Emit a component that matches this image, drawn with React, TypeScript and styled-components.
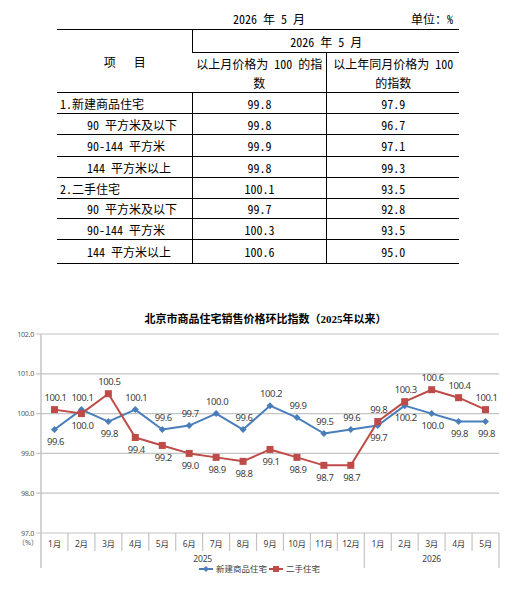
import React from "react";
import styled, { createGlobalStyle } from "styled-components";

const GlobalStyle = createGlobalStyle`
    body {
        margin: 0;
        background: #ffffff;
    }
`

const TABLE_FONT = `"Noto Sans Mono CJK SC", "Noto Sans CJK SC", "Liberation Mono", monospace`
const CHART_FONT = `"Noto Sans", "Noto Sans CJK SC", sans-serif`

const Page = styled.div`
    width: 521px;
    height: 605px;
    background: #fff;
    display: flex;
    flex-direction: column;
`

const TableBlock = styled.div`
    margin-left: 57px;
    width: 402px;
    font-family: ${TABLE_FONT};
    font-size: 12px;
    font-weight: 300;
    color: #000;
`

const Caption = styled.div`
    height: 29px;
    box-sizing: border-box;
    padding-top: 11px;
    line-height: 16px;
    display: flex;
    justify-content: space-between;
`

const CaptionDate = styled.span`
    margin-left: 176px;
    white-space: pre;
`

const CaptionUnit = styled.span`
    margin-right: 6px;
`

const Table = styled.table`
    width: 402px;
    border-collapse: collapse;
    table-layout: fixed;
    border-top: 1px solid #000;
`

const Cell = styled.td<{ $align?: "left" | "center", $indent?: number, $h?: number }>`
    padding: 0 2px 0 ${p => 3 + (p.$indent || 0)}px;
    height: ${p => p.$h || 20}px;
    line-height: 19px;
    text-align: ${p => p.$align || "center"};
    vertical-align: middle;
    border-bottom: 1px solid #000;
    border-left: 1px solid #000;
    white-space: pre-wrap;
    &:first-child {
        border-left: none;
    }
`

const HeadCell = styled(Cell).attrs({ as: "th" })`
    font-weight: 300;
`

const ChartSection = styled.div`
    margin-top: 48px;
    display: flex;
    flex-direction: column;
`

const ChartTitle = styled.div`
    height: 14px;
    line-height: 14px;
    padding-left: 10px;
    text-align: center;
    font-family: "Liberation Serif", "Noto Sans CJK SC", serif;
    font-weight: 700;
    font-size: 11px;
    color: #000;
`

const ChartSvg = styled.svg`
    display: block;
    font-family: ${CHART_FONT};
`

type RowData = { name: string, indent: number, mom: string, yoy: string, h?: number }

const rows: RowData[] = [
    { name: "1.新建商品住宅", indent: 0, mom: "99.8", yoy: "97.9" },
    { name: "90 平方米及以下", indent: 27, mom: "99.8", yoy: "96.7" },
    { name: "90-144 平方米", indent: 27, mom: "99.9", yoy: "97.1", h: 21 },
    { name: "144 平方米以上", indent: 27, mom: "99.8", yoy: "99.3" },
    { name: "2.二手住宅", indent: 0, mom: "100.1", yoy: "93.5" },
    { name: "90 平方米及以下", indent: 27, mom: "99.7", yoy: "92.8", h: 19 },
    { name: "90-144 平方米", indent: 27, mom: "100.3", yoy: "93.5" },
    { name: "144 平方米以上", indent: 27, mom: "100.6", yoy: "95.0", h: 23 },
]

const PriceTable = () => <TableBlock>
    <Caption>
        <CaptionDate>2026 年 5 月</CaptionDate>
        <CaptionUnit>单位：%</CaptionUnit>
    </Caption>
    <Table>
        <colgroup>
            <col style={{ width: 135 }} />
            <col style={{ width: 134 }} />
            <col style={{ width: 133 }} />
        </colgroup>
        <thead>
            <tr>
                <HeadCell rowSpan={2}>{"项   目"}</HeadCell>
                <HeadCell colSpan={2} $h={22}>2026 年 5 月</HeadCell>
            </tr>
            <tr>
                <HeadCell $h={39}>以上月价格为 100 的指数</HeadCell>
                <HeadCell $h={39}>以上年同月价格为 100 的指数</HeadCell>
            </tr>
        </thead>
        <tbody>
            {rows.map((r, i) => <tr key={i}>
                <Cell $align="left" $indent={r.indent} $h={r.h}>{r.name}</Cell>
                <Cell $h={r.h}>{r.mom}</Cell>
                <Cell $h={r.h}>{r.yoy}</Cell>
            </tr>)}
        </tbody>
    </Table>
</TableBlock>

// chart geometry in page coordinates
const PLOT_L = 41
const PLOT_R = 499
const COL = (PLOT_R - PLOT_L) / 17
const yOf = (v: number) => 333 + (102 - v) * 39.8
const xOf = (i: number) => PLOT_L + (i + 0.5) * COL

const BLUE = "#4a7ebb"
const RED = "#be4b48"
const LABEL = "#404040"

const newHomes = [99.6, 100.1, 99.8, 100.1, 99.6, 99.7, 100.0, 99.6, 100.2, 99.9, 99.5, 99.6, 99.7, 100.2, 100.0, 99.8, 99.8]
const resale = [100.1, 100.0, 100.5, 99.4, 99.2, 99.0, 98.9, 98.8, 99.1, 98.9, 98.7, 98.7, 99.8, 100.3, 100.6, 100.4, 100.1]
const newPos = "babaaaaaaaaabbbbb"
const resalePos = "ababbbbbbbbbaaaaa"
const months = [1, 2, 3, 4, 5, 6, 7, 8, 9, 10, 11, 12, 1, 2, 3, 4, 5]

const Series = ({ data, pos, color, marker }: { data: number[], pos: string, color: string, marker: "diamond" | "square" }) => <g>
    <polyline
        points={data.map((v, i) => `${xOf(i)},${yOf(v)}`).join(" ")}
        fill="none" stroke={color} strokeWidth={2} strokeLinejoin="round"
    />
    {data.map((v, i) => marker === "diamond"
        ? <polygon key={"m" + i} fill={color}
            points={`${xOf(i)},${yOf(v) - 3.5} ${xOf(i) + 3.5},${yOf(v)} ${xOf(i)},${yOf(v) + 3.5} ${xOf(i) - 3.5},${yOf(v)}`} />
        : <rect key={"m" + i} fill={color} x={xOf(i) - 3.5} y={yOf(v) - 3.5} width={7} height={7} />)}
    {data.map((v, i) => <text key={"t" + i} x={xOf(i) + 1} y={yOf(v) + (pos[i] === "a" ? -8.5 : 15.5)}
        textAnchor="middle" fontSize={9.5} letterSpacing={-0.45} fill={LABEL}>
        {v.toFixed(1)}
    </text>)}
</g>

const PriceChart = () => <ChartSection>
    <ChartTitle>北京市商品住宅销售价格环比指数（2025年以来）</ChartTitle>
    <ChartSvg width={521} height={255} viewBox="0 325 521 255">
        {[102, 101, 100, 99, 98, 97].map(v => <g key={v}>
            <line x1={36} x2={PLOT_R} y1={yOf(v)} y2={yOf(v)} stroke="#c4c4c4" strokeWidth={1.2} />
            <text x={34} y={yOf(v) + 2.5} textAnchor="end" fontSize={7.2} letterSpacing={-0.3} fill="#595959">{v.toFixed(1)}</text>
        </g>)}
        <text x={28} y={544} textAnchor="middle" fontSize={7.2} fill="#595959">（%）</text>
        <line x1={PLOT_L} x2={PLOT_L} y1={333} y2={567} stroke="#c4c4c4" strokeWidth={1.5} />
        {months.map((m, i) => {
            const edge = PLOT_L + (i + 1) * COL
            const long = i === 11 || i === 16
            return <g key={i}>
                <line x1={edge} x2={edge} y1={yOf(97)} y2={long ? 567 : 550} stroke="#c4c4c4" strokeWidth={1.2} />
                <text x={xOf(i)} y={546} textAnchor="middle" fontSize={8.5} letterSpacing={-0.3} fill={LABEL}>{m}月</text>
            </g>
        })}
        <text x={PLOT_L + 6 * COL} y={561} textAnchor="middle" fontSize={8.5} letterSpacing={-0.2} fill={LABEL}>2025</text>
        <text x={PLOT_L + 14.5 * COL} y={561} textAnchor="middle" fontSize={8.5} letterSpacing={-0.2} fill={LABEL}>2026</text>

        <Series data={newHomes} pos={newPos} color={BLUE} marker="diamond" />
        <Series data={resale} pos={resalePos} color={RED} marker="square" />

        <g>
            <line x1={199} x2={213} y1={568} y2={568} stroke={BLUE} strokeWidth={2} />
            <polygon fill={BLUE} points="206,565 209,568 206,571 203,568" />
            <text x={216} y={571} fontSize={8.5} fill={LABEL}>新建商品住宅</text>
            <line x1={269} x2={283} y1={568} y2={568} stroke={RED} strokeWidth={2} />
            <rect fill={RED} x={273} y={565} width={6} height={6} />
            <text x={286} y={571} fontSize={8.5} fill={LABEL}>二手住宅</text>
        </g>
    </ChartSvg>
</ChartSection>

const App = () => <>
    <GlobalStyle />
    <Page>
        <PriceTable />
        <PriceChart />
    </Page>
</>

export default App
